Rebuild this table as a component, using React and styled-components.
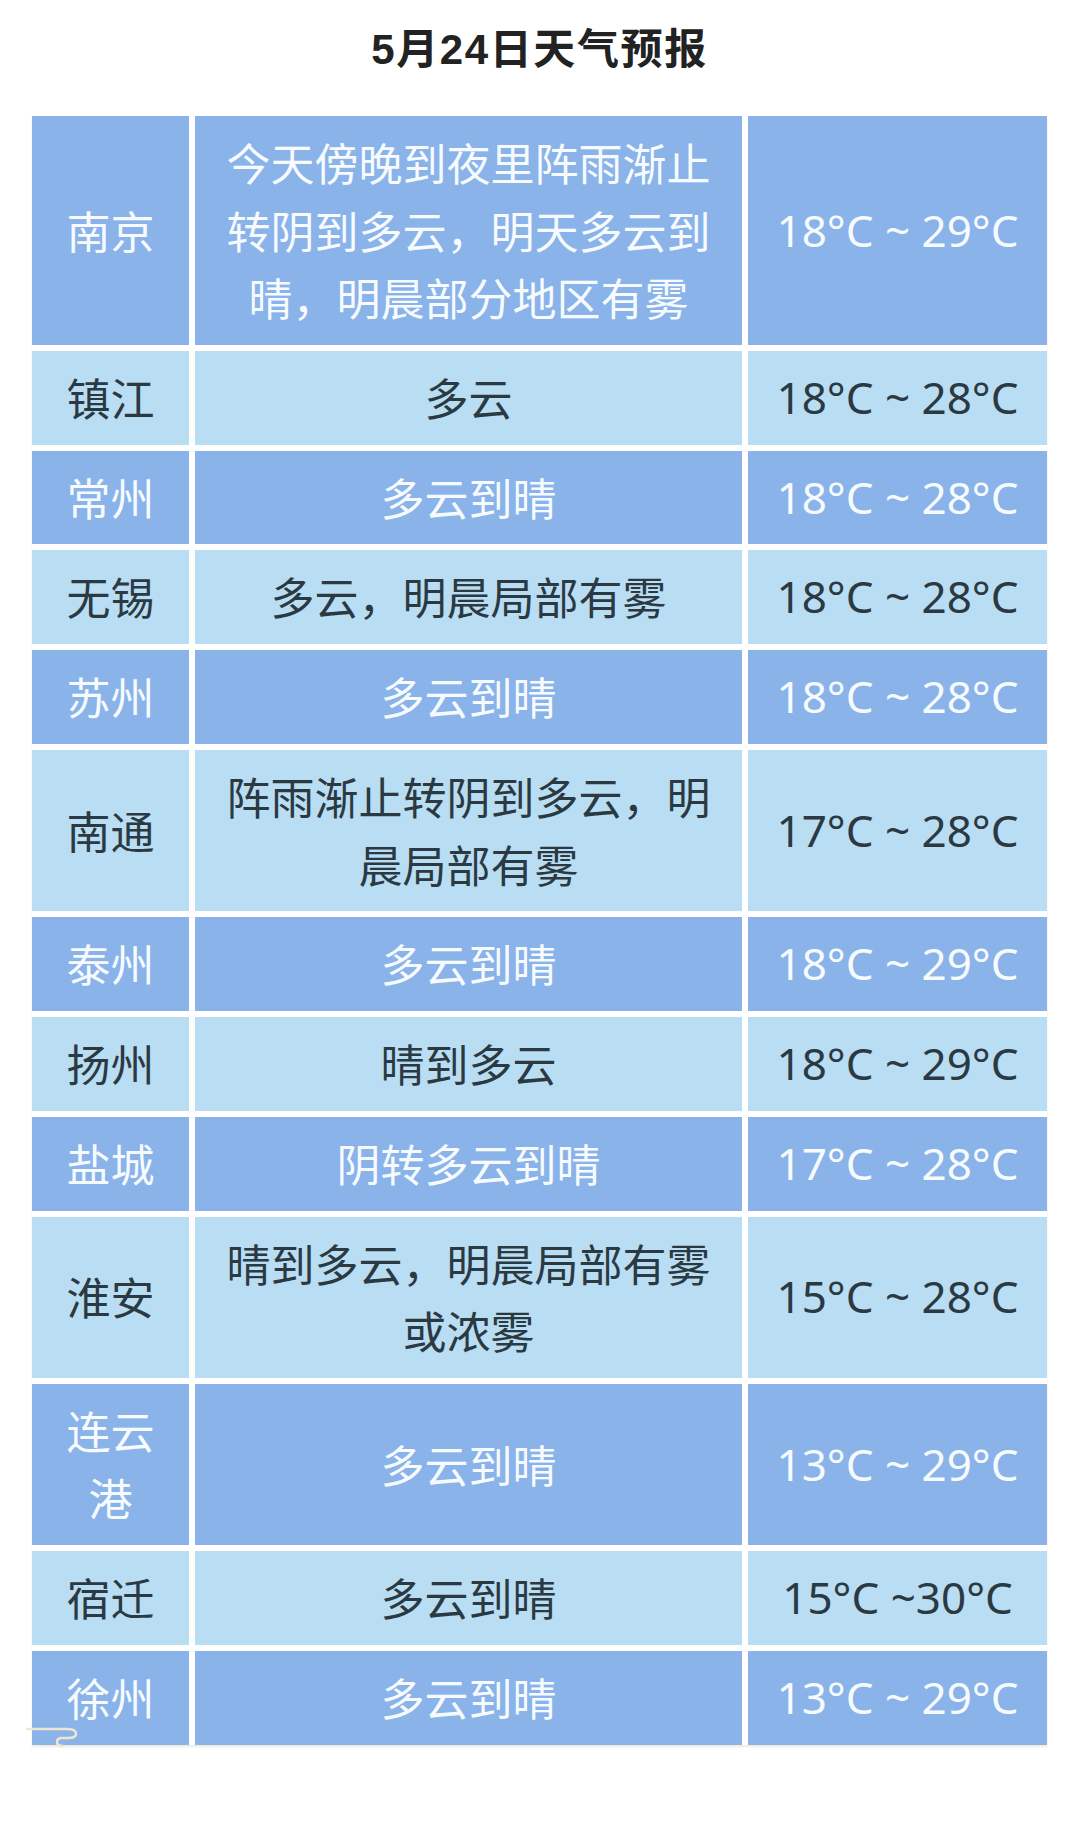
import React from 'react'
import styled, { createGlobalStyle } from 'styled-components'

const GlobalStyle = createGlobalStyle`
    html, body {
        margin: 0;
        padding: 0;
        background: #FFFFFF;
    }
    * {
        box-sizing: border-box;
    }
`

const Page = styled.main`
    width: 1080px;
    min-height: 1828px;
    padding: 20px 33px 0 32px;
    background: #FFFFFF;
    font-family: "Noto Sans CJK SC", "Noto Sans", sans-serif;
`

const Title = styled.h1`
    margin: 0 0 36px;
    font-family: "Liberation Sans", "Noto Sans CJK SC", sans-serif;
    font-size: 42px;
    font-weight: 700;
    line-height: 60px;
    letter-spacing: 1.6px;
    text-align: center;
    color: #222222;
`

const Table = styled.section`
    position: relative;
    display: flex;
    flex-direction: column;
    gap: 6px;
    width: 1015px;
    box-shadow: 0px 2px 2px rgba(225, 210, 180, 0.45);
`

const Row = styled.div`
    display: grid;
    grid-template-columns: 157px 547px 299px;
    column-gap: 6px;
`

const Cell = styled.div`
    display: flex;
    flex-direction: column;
    justify-content: center;
    align-items: center;
    padding: 13.15px 20px;
    font-size: 44px;
    font-weight: 400;
    line-height: 67.5px;
    text-align: center;
    white-space: nowrap;
    background: ${p => (p.$dark ? '#89B3E9' : '#B9DDF2')};
    color: ${p => (p.$dark ? '#F7FBFF' : '#2B3942')};
`

const TempCell = styled(Cell)`
    font-family: "Noto Sans", "Noto Sans CJK SC", sans-serif;
`

const Line = styled.span`
    display: block;
`

const Ribbon = styled.svg`
    position: absolute;
    left: -6px;
    bottom: -4px;
    pointer-events: none;
`

const forecast = [
    { city: ['南京'], desc: ['今天傍晚到夜里阵雨渐止', '转阴到多云，明天多云到', '晴，明晨部分地区有雾'], temp: '18°C ~ 29°C' },
    { city: ['镇江'], desc: ['多云'], temp: '18°C ~ 28°C' },
    { city: ['常州'], desc: ['多云到晴'], temp: '18°C ~ 28°C' },
    { city: ['无锡'], desc: ['多云，明晨局部有雾'], temp: '18°C ~ 28°C' },
    { city: ['苏州'], desc: ['多云到晴'], temp: '18°C ~ 28°C' },
    { city: ['南通'], desc: ['阵雨渐止转阴到多云，明', '晨局部有雾'], temp: '17°C ~ 28°C' },
    { city: ['泰州'], desc: ['多云到晴'], temp: '18°C ~ 29°C' },
    { city: ['扬州'], desc: ['晴到多云'], temp: '18°C ~ 29°C' },
    { city: ['盐城'], desc: ['阴转多云到晴'], temp: '17°C ~ 28°C' },
    { city: ['淮安'], desc: ['晴到多云，明晨局部有雾', '或浓雾'], temp: '15°C ~ 28°C' },
    { city: ['连云', '港'], desc: ['多云到晴'], temp: '13°C ~ 29°C' },
    { city: ['宿迁'], desc: ['多云到晴'], temp: '15°C ~30°C' },
    { city: ['徐州'], desc: ['多云到晴'], temp: '13°C ~ 29°C' },
]

const Lines = ({ items }) => items.map(text => <Line key={text}>{text}</Line>)

const App = () => {
    return (
        <Page>
            <GlobalStyle />
            <Title>5月24日天气预报</Title>
            <Table>
                {forecast.map((row, i) => {
                    const dark = i % 2 === 0
                    return (
                        <Row key={row.city.join('')}>
                            <Cell $dark={dark}><Lines items={row.city} /></Cell>
                            <Cell $dark={dark}><Lines items={row.desc} /></Cell>
                            <TempCell $dark={dark}>{row.temp}</TempCell>
                        </Row>
                    )
                })}
                <Ribbon width="60" height="24" viewBox="0 0 60 24">
                    <path
                        d="M1 4 H42 Q50 4 50 9 Q50 13 42 13 H36 Q31 13 31 17 Q31 21 37 21"
                        fill="none"
                        stroke="#EFE6D2"
                        strokeWidth="2.5"
                        strokeLinecap="round"
                    />
                </Ribbon>
            </Table>
        </Page>
    )
}

export default App
